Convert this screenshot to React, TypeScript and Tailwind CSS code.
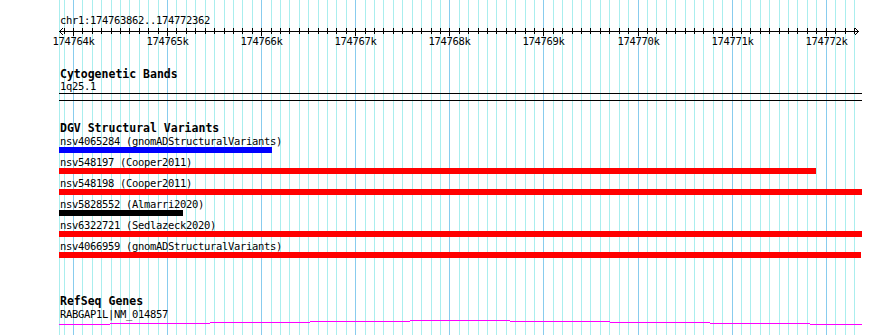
import React from "react";

const MONO = { fontFamily: '"DejaVu Sans Mono", "Liberation Mono", monospace' };
const X0 = 73.3;
const STEP = 9.409;

const gridLines: { x: number; major: boolean }[] = [];
for (let k = -1; ; k++) {
  const x = Math.floor(X0 + k * STEP + 0.2);
  if (x >= 862) break;
  gridLines.push({ x, major: k % 10 === 0 && k >= 0 });
}

const majors = gridLines.filter((g) => g.major);

const rows = [
  { label: "nsv4065284 (gnomADStructuralVariants)", color: "bg-[#0000ff]", width: 213 },
  { label: "nsv548197 (Cooper2011)", color: "bg-[#ff0000]", width: 757 },
  { label: "nsv548198 (Cooper2011)", color: "bg-[#ff0000]", width: 803 },
  { label: "nsv5828552 (Almarri2020)", color: "bg-black", width: 124 },
  { label: "nsv6322721 (Sedlazeck2020)", color: "bg-[#ff0000]", width: 803 },
  { label: "nsv4066959 (gnomADStructuralVariants)", color: "bg-[#ff0000]", width: 802 },
];

const geneSegs: [number, number, number][] = [
  [59, 110, 324],
  [110, 210, 323],
  [210, 310, 322],
  [310, 410, 321],
  [410, 510, 320],
  [510, 610, 321],
  [610, 710, 322],
  [710, 810, 323],
  [810, 862, 324],
];

export default function App() {
  return (
    <div className="relative w-[890px] h-[335px] overflow-hidden bg-white text-black" style={MONO}>
      {/* background grid */}
      <svg className="absolute left-0 top-0" width={890} height={335}>
        {gridLines.map((g, i) => (
          <rect key={i} x={g.x} y={0} width={1} height={335} fill={g.major ? "#88ccee" : "#aaeeee"} />
        ))}
        <rect x={59} y={0} width={1} height={335} fill="#aaeeee" />
      </svg>

      <div className="relative w-[862px] pl-[59px] flex flex-col">
        {/* ruler */}
        <div className="pt-[14px] pl-[1px] text-[10.5px] tracking-[-0.32px] leading-[12px] h-[26px]">chr1:174763862..174772362</div>
        <svg className="-ml-[59px] block" width={862} height={24}>
          <rect x={59} y={5} width={800} height={1} fill="#000" />
          <polyline points="63,2 59.5,5.5 63,9" fill="none" stroke="#000" strokeWidth={1} />
          <polyline points="855,2 858.5,5.5 855,9" fill="none" stroke="#000" strokeWidth={1} />
          {gridLines.map((g, i) =>
            g.x > 60 && g.x < 856 ? (
              <rect key={i} x={g.x} y={2} width={1} height={g.major ? 8 : 6} fill="#000" />
            ) : null
          )}
          {majors.map((g, i) => (
            <text
              key={i}
              x={g.x + 0.5}
              y={18.5}
              textAnchor="middle"
              fontSize={10.5}
              letterSpacing={-0.32}
              fill="#000"
              style={MONO}
            >
              {`${174764 + i}k`}
            </text>
          ))}
        </svg>

        {/* Cytogenetic Bands */}
        <div className="mt-[18px] pl-[1px] font-bold text-[11.5px] leading-[12px]">Cytogenetic Bands</div>
        <div className="pl-[1px] text-[10.5px] tracking-[-0.32px] leading-[12px]">1q25.1</div>
        <div className="mt-[1px] h-[8px] w-[803px] border-y border-black"></div>

        {/* DGV */}
        <div className="mt-[21px] pl-[1px] font-bold text-[11.5px] leading-[12px]">DGV Structural Variants</div>
        <div className="mt-[1px] flex flex-col gap-[3px]">
          {rows.map((r, i) => (
            <div key={i} className="flex flex-col">
              <div className="pl-[1px] text-[10.5px] tracking-[-0.32px] leading-[12px] whitespace-pre">{r.label}</div>
              <div className={`h-[6px] ${r.color}`} style={{ width: r.width }}></div>
            </div>
          ))}
        </div>

        {/* RefSeq */}
        <div className="mt-[37px] pl-[1px] font-bold text-[11.5px] leading-[12px]">RefSeq Genes</div>
        <div className="mt-[1px] pl-[1px] text-[10.5px] tracking-[-0.32px] leading-[12px]">RABGAP1L|NM_014857</div>
        <svg className="-ml-[59px] block" width={862} height={8}>
          {geneSegs.map(([a, b, y], i) => (
            <rect key={i} x={a} y={y - 320} width={b - a} height={1} fill="#ff00ff" />
          ))}
        </svg>
      </div>
    </div>
  );
}
